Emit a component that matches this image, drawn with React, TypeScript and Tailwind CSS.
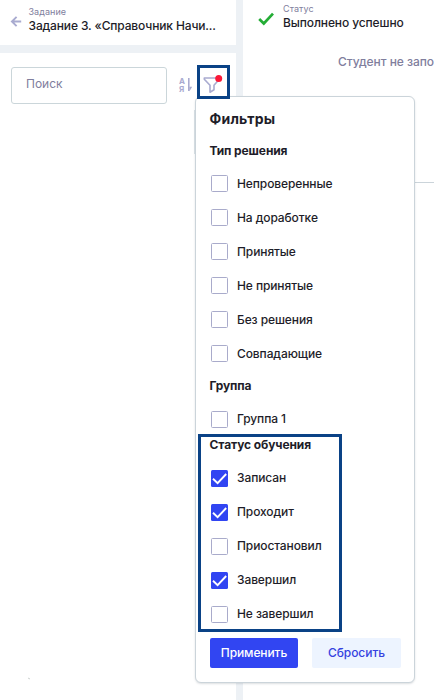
import React from "react";

function Row({ label, checked = false }: { label: string; checked?: boolean }) {
  return (
    <label className="flex h-[34px] items-center pl-px">
      <span
        className={
          checked
            ? "flex size-[17px] items-center justify-center rounded-[1.5px] bg-[#3145f2]"
            : "size-[17px] rounded-[1.5px] border border-[#a9abcb] bg-white"
        }
      >
        {checked && (
          <svg width="17" height="17" viewBox="0 0 17 17" fill="none">
            <path d="M2 8.7 6.6 13.2 15.2 4" stroke="white" strokeWidth="1.9" />
          </svg>
        )}
      </span>
      <span className="ml-[9px] text-[12px] font-medium leading-4 tracking-[-0.1px]">{label}</span>
    </label>
  );
}

function Title({ children }: { children: React.ReactNode }) {
  return <h3 className="-ml-[0.5px] h-5 text-[12px] font-bold leading-5 tracking-[-0.1px]">{children}</h3>;
}

function Filters() {
  return (
    <section className="absolute left-[195px] top-24 h-[587px] w-[220px] rounded-[6px] border border-[#cbd4da] bg-white pl-[14px] pr-[13px] shadow-[0_1px_2px_rgba(60,80,90,0.18)]">
      <h2 className="-ml-[0.5px] h-11 text-[14px] font-bold leading-[44px] tracking-[0.25px]">Фильтры</h2>
      <Title>Тип решения</Title>
      <div className="pt-[5.5px]">
        <Row label="Непроверенные" />
        <Row label="На доработке" />
        <Row label="Принятые" />
        <Row label="Не принятые" />
        <Row label="Без решения" />
        <Row label="Совпадающие" />
      </div>
      <div className="pt-[5.5px]">
        <Title>Группа</Title>
        <div className="pt-1.5">
          <Row label="Группа 1" />
        </div>
      </div>
      <div className="-mt-px">
        <Title>Статус обучения</Title>
        <div className="pt-1.5">
          <Row label="Записан" checked />
          <Row label="Проходит" checked />
          <Row label="Приостановил" />
          <Row label="Завершил" checked />
          <Row label="Не завершил" />
        </div>
      </div>
      <div className="flex gap-[14px] pt-[7px]">
        <button className="h-[30px] w-[88px] rounded-[2px] bg-[#3145f2] text-[12px] font-medium tracking-[-0.1px] text-white">
          Применить
        </button>
        <button className="h-[30px] w-[89px] rounded-[2px] bg-[#edf4ff] text-[12px] font-medium tracking-[-0.05px] text-[#3542e0]">
          Сбросить
        </button>
      </div>
    </section>
  );
}

export default function App() {
  return (
    <main className="relative flex h-[700px] w-[434px] overflow-hidden bg-white font-['Inter','Liberation_Sans',sans-serif] text-[#1e1d29]">
      <aside className="flex w-[236px] shrink-0 flex-col">
        <header className="flex h-[45px] pl-[10px]">
          <svg className="mt-[15px] shrink-0" width="12" height="13" viewBox="0 0 12 13" fill="none" stroke="#a9abd0" strokeWidth="1.9">
            <path d="M11.2 6.5H2M6.6 1.8 1.9 6.5l4.7 4.7" />
          </svg>
          <div className="ml-[6.5px] pt-[6px]">
            <div className="text-[9px] leading-3 tracking-[0.05px] text-[#807e9d]">Задание</div>
            <div className="whitespace-nowrap text-[12px] font-medium leading-4 tracking-[-0.14px]">Задание 3. «Справочник Начи...</div>
          </div>
        </header>
        <div className="h-2 bg-[#edf1f5]" />
        <div className="flex pl-[11px] pt-[14px]">
          <div className="flex h-[37px] w-[156px] items-center rounded-[3px] border border-[#cbd6da] pb-[3px] pl-[14px] text-[12px] text-[#807e9d]">
            Поиск
          </div>
          <div className="ml-[12px] mt-[10px] flex text-[#a9abd0]">
            <div className="w-[7px] text-[8px] font-bold leading-[8px]">
              <div>А</div>
              <div>Я</div>
            </div>
            <svg className="ml-[1px]" width="6" height="16" viewBox="0 0 6 16" fill="none">
              <path stroke="currentColor" strokeWidth="1.6" d="M1.8 1v13" />
              <path fill="currentColor" d="M2.4 9.8H5.2L2.4 14.2Z" />
            </svg>
          </div>
        </div>
      </aside>
      <div className="w-[7px] shrink-0 bg-[#edf1f5]" />
      <article className="min-w-0 flex-1">
        <div className="flex pl-[15px] pt-[3px]">
          <svg className="mt-[9px]" width="17" height="14" viewBox="0 0 17 14" fill="none">
            <path d="m1.2 7 4.6 4.5L15 1.7" stroke="#24ad36" strokeWidth="2.7" />
          </svg>
          <div className="ml-2">
            <div className="text-[9px] leading-3 tracking-[0.1px] text-[#807e9d]">Статус</div>
            <div className="whitespace-nowrap text-[12px] font-medium leading-4 tracking-[-0.12px]">Выполнено успешно</div>
          </div>
        </div>
        <div className="ml-[95px] mt-[23px] whitespace-nowrap text-[12px] font-medium leading-4 tracking-[-0.05px] text-[#807e9d]">
          Студент не запо
        </div>
        <div className="mt-[112px] h-px bg-[#cbd4da]" />
      </article>
      <div className="absolute left-[194px] top-[110px] h-[44px] w-px bg-[#dce3e7]" />
      <Filters />
      <div className="absolute left-[197px] top-[65px] h-[34px] w-[33px] border-[3px] border-[#0a4286] bg-white">
        <svg width="27" height="28" viewBox="0 0 27 28" fill="none">
          <path d="M4.3 10h15v1.2L14 17.3v4.5l-4 2.4v-6.9L4.3 11.2Z" stroke="#a9abd0" strokeWidth="1.6" strokeLinejoin="round" />
          <circle cx="18.7" cy="10.5" r="3.5" fill="#fb1838" />
        </svg>
      </div>
      <div className="absolute left-[198px] top-[434px] h-[198px] w-[144px] border-[3px] border-[#0a4286]" />
      <div className="absolute left-[28px] top-[678px] h-px w-[2px] rotate-45 bg-[#c9cfcd]" />
    </main>
  );
}
